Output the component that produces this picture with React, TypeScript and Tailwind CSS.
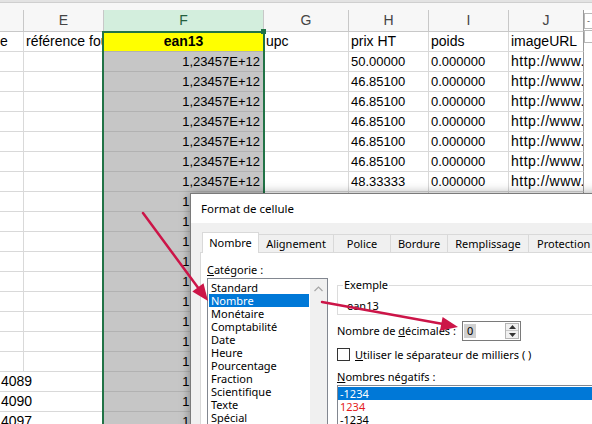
import React from "react";

const H_VALS = ["50.00000", "46.85100", "46.85100", "46.85100", "46.85100", "46.85100", "48.33333"];
const LEFT_TAIL: Record<number, string> = { 17: "4089", 18: "4090", 19: "4097" };
const CATS = ["Standard", "Nombre", "Monétaire", "Comptabilité", "Date", "Heure", "Pourcentage", "Fraction", "Scientifique", "Texte", "Spécial"];
const ROWS = Array.from({ length: 20 }, (_, i) => i);

const cell = "shrink-0 h-full border-r border-b border-[#d9d9d9] overflow-hidden whitespace-nowrap flex items-center bg-white";
const cellF = "shrink-0 w-[160px] h-full border-r border-b border-[#b2b2b2] overflow-hidden whitespace-nowrap flex items-center";
const hcell = "shrink-0 h-full border-r border-b border-[#c8c8c8] flex items-center justify-center text-[14px] text-[#444]";

function HeaderRow() {
  return (
    <div className="flex h-[22px]">
      <div className={`${hcell} w-[24px] bg-[#f7f7f7]`} />
      <div className={`${hcell} w-[80px] bg-[#f7f7f7]`}>E</div>
      <div className={`${hcell} w-[160px] bg-[#d3eedd] text-[#23603e]`}>F</div>
      <div className={`${hcell} w-[85px] bg-[#f7f7f7]`}>G</div>
      <div className={`${hcell} w-[80px] bg-[#f7f7f7]`}>H</div>
      <div className={`${hcell} w-[80px] bg-[#f7f7f7]`}>I</div>
      <div className={`${hcell} w-[75px] bg-[#f7f7f7] border-r-[#9a9a9a]`}>J</div>
      <div className="flex-1 h-full bg-white flex items-start pt-[3px]">
        <div className="w-[9px] h-[16px] border border-[#b8b8b8] flex items-center justify-center text-[9px] leading-none text-[#555]">-</div>
      </div>
    </div>
  );
}

function DataRow({ i }: { i: number }) {
  const isTitle = i === 0;
  const hasData = i >= 1 && i <= 7;
  const tail = LEFT_TAIL[i];
  return (
    <div className="flex h-[20px] text-[14px] text-black">
      {tail ? (
        <div className={`${cell} w-[104px] pl-[1px]`}>{tail}</div>
      ) : (
        <>
          <div className={`${cell} w-[24px]`}>{isTitle ? "e" : ""}</div>
          <div className={`${cell} w-[80px] pl-[2px]`}>{isTitle ? "référence fournisseur" : ""}</div>
        </>
      )}
      {isTitle ? (
        <div className={`${cellF} bg-[#ffff00] justify-center font-bold`}>ean13</div>
      ) : (
        <div className={`${cellF} bg-[#c6c6c6] justify-end pr-[3px] text-[13px]`}>1,23457E+12</div>
      )}
      <div className={`${cell} w-[85px] pl-[2px]`}>{isTitle ? "upc" : ""}</div>
      <div className={`${cell} w-[80px] pl-[2px] ${isTitle ? "" : "text-[13px]"}`}>
        {isTitle ? "prix HT" : hasData ? H_VALS[i - 1] : ""}
      </div>
      <div className={`${cell} w-[80px] pl-[2px] ${isTitle ? "" : "text-[13px]"}`}>
        {isTitle ? "poids" : hasData ? "0.000000" : ""}
      </div>
      <div className={`${cell} w-[75px] pl-[2px] border-r-[#9a9a9a] ${isTitle ? "" : "tracking-[0.5px]"}`}>
        {isTitle ? "imageURL" : hasData ? "http://www.example.fr/img" : ""}
      </div>
      <div className="flex-1 h-full bg-white flex items-start">
        {isTitle ? <div className="w-[9px] h-[13px] mt-[-2px] border border-[#b8b8b8]" /> : null}
      </div>
    </div>
  );
}

function Tab({ label, w, active, left }: { label: string; w: string; active?: boolean; left?: boolean }) {
  if (active) {
    return (
      <div className={`relative z-10 -mb-px h-[21px] ${w} bg-white border border-b-0 border-[#d9d9d9] flex items-center justify-center pb-[1px]`}>
        {label}
      </div>
    );
  }
  return (
    <div
      className={`h-[18px] ${w} -ml-px border border-b-0 border-[#d9d9d9] bg-[#f0f0f0] flex items-center whitespace-nowrap ${left ? "justify-start pl-[8px]" : "justify-center"}`}
    >
      {label}
    </div>
  );
}

function Dialog() {
  return (
    <div className="absolute left-[190px] top-[193px] w-[430px] h-[260px] bg-[#f0f0f0] border border-[#7a7a7a] shadow-[0_0_10px_rgba(0,0,0,0.35)] font-['Noto_Sans',sans-serif] text-[11px] leading-[14px] text-black">
      <div className="h-[29px] bg-white flex items-center pl-[10px] text-[11.5px]">Format de cellule</div>
      <div className="pt-[9px]">
        <div className="flex items-end h-[20px] pl-[11px]">
          <Tab label="Nombre" w="w-[57px]" active />
          <Tab label="Alignement" w="w-[76px]" />
          <Tab label="Police" w="w-[58px]" />
          <Tab label="Bordure" w="w-[58px]" />
          <Tab label="Remplissage" w="w-[82px]" />
          <Tab label="Protection" w="w-[80px]" left />
        </div>
        <div className="ml-[9px] bg-white border border-[#d9d9d9] h-[220px] flex">
          <div className="pl-[6px] pt-[10px] shrink-0">
            <div className="h-[14px]">
              <span className="underline">C</span>atégorie :
            </div>
            <div className="mt-[1px] w-[121px] h-[160px] border border-[#828790] bg-white flex">
              <div className="w-[102px] pt-[2px]">
                {CATS.map((c) => (
                  <div
                    key={c}
                    className={`h-[13px] leading-[13px] ml-[1px] w-[100px] pl-[2px] whitespace-nowrap ${c === "Nombre" ? "bg-[#0078d7] text-white" : ""}`}
                  >
                    {c}
                  </div>
                ))}
              </div>
              <div className="ml-auto w-[17px] h-full bg-[#f0f0f0] flex justify-center pt-[7px]">
                <svg width="9" height="6" viewBox="0 0 9 6">
                  <polyline points="0.5,5 4.5,1 8.5,5" fill="none" stroke="#a6a6a6" strokeWidth="1.2" />
                </svg>
              </div>
            </div>
          </div>
          <div className="ml-[9px] pt-[25px] flex-1 min-w-0">
            <fieldset className="border border-[#dcdcdc] h-[37px]">
              <legend className="ml-[5px] px-[1px] leading-[14px]">Exemple</legend>
              <div className="pl-[9px] mt-[7px] leading-[14px]">ean13</div>
            </fieldset>
            <div className="mt-[6px] h-[20px] flex items-center">
              <div className="w-[125px] whitespace-nowrap">
                Nombre de <span className="underline">d</span>écimales :
              </div>
              <div className="w-[59px] h-[20px] border border-[#7a7a7a] bg-white flex items-center">
                <span className="ml-[1px] px-[3px] bg-[#d0d0d0] leading-[14px]">0</span>
                <div className="ml-auto mr-[1px] w-[14px] h-[16px] flex flex-col border border-[#b5b5b5] bg-[#f0f0f0]">
                  <div className="h-1/2 flex items-center justify-center border-b border-[#c8c8c8]">
                    <svg width="7" height="4" viewBox="0 0 7 4">
                      <polygon points="0,4 3.5,0 7,4" fill="#333" />
                    </svg>
                  </div>
                  <div className="h-1/2 flex items-center justify-center">
                    <svg width="7" height="4" viewBox="0 0 7 4">
                      <polygon points="0,0 7,0 3.5,4" fill="#333" />
                    </svg>
                  </div>
                </div>
              </div>
            </div>
            <div className="mt-[7px] h-[13px] flex items-center">
              <div className="w-[13px] h-[13px] border border-[#333] bg-white shrink-0" />
              <div className="ml-[5px] whitespace-nowrap">
                <span className="underline">U</span>tiliser le séparateur de milliers ( )
              </div>
            </div>
            <div className="mt-[9px] h-[14px]">
              <span className="underline">N</span>ombres négatifs :
            </div>
            <div className="mt-[1px] h-[60px] border border-[#828790] bg-white pt-[1px]">
              <div className="h-[13px] leading-[13px] pl-[2px] bg-[#0078d7] text-white">-1234</div>
              <div className="h-[13px] leading-[13px] pl-[2px] text-[#e31c1c]">1234</div>
              <div className="h-[13px] leading-[13px] pl-[2px]">-1234</div>
            </div>
          </div>
        </div>
      </div>
    </div>
  );
}

function Arrows() {
  return (
    <svg className="absolute left-0 top-0 z-50 pointer-events-none" width="592" height="424" viewBox="0 0 592 424">
      <line x1="143" y1="213" x2="199" y2="289" stroke="#cc1548" strokeWidth="2.5" strokeLinecap="round" />
      <polygon points="208,301 192.3,291.5 203.5,283.2" fill="#cc1548" />
      <line x1="322" y1="302" x2="443" y2="324" stroke="#cc1548" strokeWidth="2.5" strokeLinecap="round" />
      <polygon points="458,327 440,330.8 442.6,317" fill="#cc1548" />
    </svg>
  );
}

export default function App() {
  return (
    <div className="relative w-[592px] h-[424px] overflow-hidden bg-white font-['Liberation_Sans',Arial,sans-serif]">
      <div className="h-[2px] bg-[#e3e3e3]" />
      <div className="h-[1px] bg-[#cfcfcf]" />
      <div className="h-[7px] bg-[#f7f7f7]" />
      <HeaderRow />
      {ROWS.map((i) => (
        <DataRow key={i} i={i} />
      ))}
      <div className="absolute left-[102px] top-[31px] w-[163px] h-[420px] border-2 border-[#217346]" />
      <div className="absolute left-[261px] top-[29px] w-[5px] h-[5px] bg-[#217346]" />
      <Dialog />
      <Arrows />
    </div>
  );
}
